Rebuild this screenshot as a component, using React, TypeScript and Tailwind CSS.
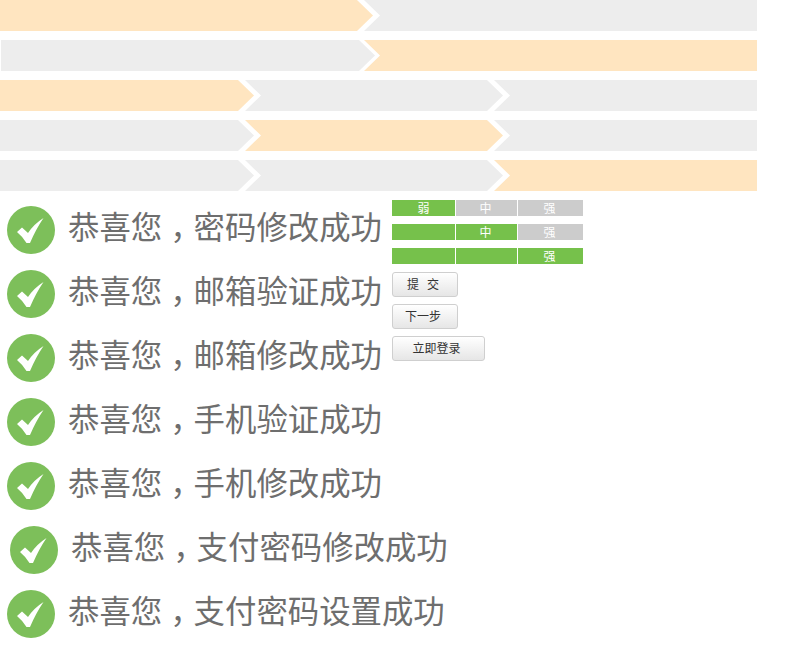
const cjk = "font-['Noto_Sans_CJK_SC','Liberation_Sans',sans-serif]";

const steps = [
  { start: 0, overlap: 'ml-[-9px]', segs: [{ w: 373, on: true }, { w: 393, on: false }] },
  { start: 1, overlap: 'ml-[-11px]', segs: [{ w: 374, on: false }, { w: 393, on: true }] },
  { start: 0, overlap: 'ml-[-9px]', segs: [{ w: 254, on: true }, { w: 258, on: false }, { w: 264, on: false }] },
  { start: 0, overlap: 'ml-[-9px]', segs: [{ w: 254, on: false }, { w: 258, on: true }, { w: 264, on: false }] },
  { start: 0, overlap: 'ml-[-9px]', segs: [{ w: 254, on: false }, { w: 258, on: false }, { w: 264, on: true }] },
];

const messages = [
  '密码修改成功',
  '邮箱验证成功',
  '邮箱修改成功',
  '手机验证成功',
  '手机修改成功',
  '支付密码修改成功',
  '支付密码设置成功',
];

const strengths = [
  { level: 1, label: 0 },
  { level: 2, label: 1 },
  { level: 3, label: 2 },
];

function StepRow({ start, overlap, segs }: { start: number; overlap: string; segs: { w: number; on: boolean }[] }) {
  return (
    <div className={`flex h-[31px] w-[757px] overflow-hidden ${start ? 'pl-px' : ''}`}>
      {segs.map((seg, i) => {
        const first = i === 0;
        const last = i === segs.length - 1;
        const shape = first
          ? '[clip-path:polygon(0_0,calc(100%-16px)_0,100%_50%,calc(100%-16px)_100%,0_100%)]'
          : last
            ? '[clip-path:polygon(0_0,100%_0,100%_100%,0_100%,16px_50%)]'
            : '[clip-path:polygon(0_0,calc(100%-16px)_0,100%_50%,calc(100%-16px)_100%,0_100%,16px_50%)]';
        return (
          <div
            key={i}
            className={`h-full shrink-0 ${seg.on ? 'bg-[#ffe5c0]' : 'bg-[#ededed]'} ${shape} ${first ? '' : overlap}`}
            style={{ width: seg.w }}
          />
        );
      })}
    </div>
  );
}

function CheckIcon() {
  return (
    <svg width="48" height="48" viewBox="0 0 48 48" className="shrink-0">
      <circle cx="24" cy="24" r="24" fill="#7dbf5a" />
      <path d="M10 26 L15 21.5 L21 27 Q27 18 36.5 12 Q29 23 23 37 L19.5 37 Q16 31 10 26 Z" fill="#fff" />
    </svg>
  );
}

function StrengthBar({ level, label }: { level: number; label: number }) {
  const cells = ['弱', '中', '强'];
  const widths = ['w-[63px]', 'w-[61px]', 'w-[65px]'];
  return (
    <div className="flex h-4 w-[191px] gap-px">
      {cells.map((text, i) => (
        <div
          key={text}
          className={`${widths[i]} flex items-center justify-center text-xs leading-none text-white ${i > 0 ? 'pr-0.5' : ''} ${i < level ? 'bg-[#76c14b]' : 'bg-[#cccccc]'}`}
        >
          {i >= label ? text : ''}
        </div>
      ))}
    </div>
  );
}

function Btn({ text, wide }: { text: string; wide?: boolean }) {
  return (
    <button
      className={`flex h-[25px] items-center justify-center whitespace-pre rounded-[3px] border border-[#cfcfcf] bg-gradient-to-b from-white to-[#e6e6e6] pb-px pr-1 text-xs text-[#333] ${wide ? 'w-[93px]' : 'w-[66px]'}`}
    >
      {text}
    </button>
  );
}

export default function App() {
  return (
    <div className={`h-[650px] w-[800px] overflow-hidden bg-white ${cjk}`}>
      <div className="flex flex-col gap-[9px]">
        {steps.map((row, i) => (
          <StepRow key={i} {...row} />
        ))}
      </div>
      <div className="flex">
        <div className="flex w-[392px] shrink-0 flex-col pt-[7px]">
          {messages.map((msg, i) => (
            <div key={msg} className={`flex h-16 items-center gap-[13px] whitespace-nowrap ${i === 5 ? 'pl-2.5' : 'pl-[7px]'}`}>
              <CheckIcon />
              <span className="mb-[9px] text-[31.4px] leading-none text-[#6e6e6e]">
                恭喜您
                <span className="pl-2 tracking-[-8px]">，</span>
                {msg}
              </span>
            </div>
          ))}
        </div>
        <div className="flex flex-col pt-[9px]">
          <div className="flex flex-col gap-2">
            {strengths.map((s) => (
              <StrengthBar key={s.level} {...s} />
            ))}
          </div>
          <div className="mt-2 flex flex-col items-start gap-[7px]">
            <Btn text="提   交" />
            <Btn text="下一步" />
            <Btn text="立即登录" wide />
          </div>
        </div>
      </div>
    </div>
  );
}
